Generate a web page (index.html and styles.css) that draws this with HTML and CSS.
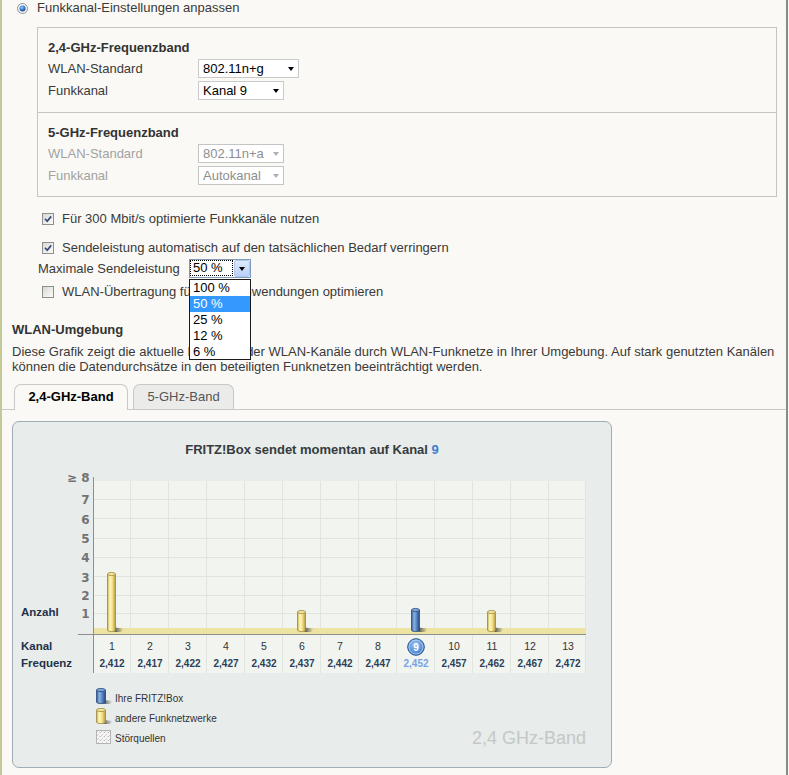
FILE: index.html
```html
<!DOCTYPE html>
<html lang="de">
<head>
<meta charset="utf-8">
<title>WLAN Funkkanal-Einstellungen</title>
<link rel="stylesheet" href="styles.css">
</head>
<body>
<div class="page">
  <div class="radio-row">
    <svg class="radio" width="11" height="11" viewBox="0 0 11 11">
      <defs>
        <radialGradient id="rdot" cx="0.4" cy="0.35" r="0.7">
          <stop offset="0" stop-color="#9cd0ff"/>
          <stop offset="0.5" stop-color="#3d7fd0"/>
          <stop offset="1" stop-color="#163f7a"/>
        </radialGradient>
      </defs>
      <circle cx="5.5" cy="5.5" r="5" fill="#f4f4f0" stroke="#8796a6" stroke-width="1"/>
      <circle cx="5.5" cy="5.5" r="3" fill="url(#rdot)"/>
    </svg>
    <span>Funkkanal-Einstellungen anpassen</span>
  </div>

  <div class="freqbox">
    <div class="band">
      <div class="band-title">2,4-GHz-Frequenzband</div>
      <div class="row"><span class="lbl">WLAN-Standard</span><div class="sel w101">802.11n+g</div></div>
      <div class="row"><span class="lbl">Funkkanal</span><div class="sel w86">Kanal 9</div></div>
    </div>
    <div class="band band-off">
      <div class="band-title">5-GHz-Frequenzband</div>
      <div class="row"><span class="lbl">WLAN-Standard</span><div class="sel w86">802.11n+a</div></div>
      <div class="row"><span class="lbl">Funkkanal</span><div class="sel w86">Autokanal</div></div>
    </div>
  </div>

  <div class="opts">
    <div class="cb-row cb-first">
      <span class="cb"><svg width="10" height="10" viewBox="0 0 10 10"><path d="M2 4.8 L4.2 7.2 L8.2 2.4" fill="none" stroke="#34467a" stroke-width="1.7"/></svg></span>
      <span>Für 300 Mbit/s optimierte Funkkanäle nutzen</span>
    </div>
    <div class="cb-row cb-second">
      <span class="cb"><svg width="10" height="10" viewBox="0 0 10 10"><path d="M2 4.8 L4.2 7.2 L8.2 2.4" fill="none" stroke="#34467a" stroke-width="1.7"/></svg></span>
      <span>Sendeleistung automatisch auf den tatsächlichen Bedarf verringern</span>
    </div>
    <div class="max-row">
      <span class="max-lbl">Maximale Sendeleistung</span>
      <div class="combo">
        <div class="combo-text">50 %</div>
        <div class="combo-btn"></div>
        <ul class="combo-list">
          <li>100 %</li>
          <li class="hl">50 %</li>
          <li>25 %</li>
          <li>12 %</li>
          <li>6 %</li>
        </ul>
      </div>
    </div>
    <div class="cb-row cb-third">
      <span class="cb"></span>
      <span>WLAN-Übertragung für Video-Anwendungen optimieren</span>
    </div>
  </div>

  <div class="env">
    <div class="env-title">WLAN-Umgebung</div>
    <div class="env-desc">Diese Grafik zeigt die aktuelle Belegung der WLAN-Kanäle durch WLAN-Funknetze in Ihrer Umgebung. Auf stark genutzten Kanälen<br>können die Datendurchsätze in den beteiligten Funknetzen beeinträchtigt werden.</div>
  </div>

  <div class="tabs">
    <div class="tab tab-active">2,4-GHz-Band</div>
    <div class="tab tab-off">5-GHz-Band</div>
  </div>

  <div class="panel">
    <div class="chart-title">FRITZ!Box sendet momentan auf Kanal <span class="blue">9</span></div>
    <svg class="chart" width="597" height="203" viewBox="13 470 597 203">
      <defs>
        <linearGradient id="gy" x1="0" x2="1" y1="0" y2="0">
          <stop offset="0" stop-color="#c9af4e"/>
          <stop offset="0.3" stop-color="#fff8c0"/>
          <stop offset="0.62" stop-color="#f1df88"/>
          <stop offset="1" stop-color="#b59a3a"/>
        </linearGradient>
        <linearGradient id="gb" x1="0" x2="1" y1="0" y2="0">
          <stop offset="0" stop-color="#2d5590"/>
          <stop offset="0.32" stop-color="#8db4e4"/>
          <stop offset="0.62" stop-color="#5a88c6"/>
          <stop offset="1" stop-color="#24477e"/>
        </linearGradient>
        <linearGradient id="gs" x1="0" x2="1" y1="0" y2="0">
          <stop offset="0" stop-color="#333" stop-opacity="0.85"/>
          <stop offset="1" stop-color="#666" stop-opacity="0"/>
        </linearGradient>
        <radialGradient id="gc" cx="0.45" cy="0.35" r="0.65">
          <stop offset="0" stop-color="#9cc4f4"/>
          <stop offset="1" stop-color="#3f7acb"/>
        </radialGradient>
        <pattern id="noise" width="4" height="4" patternUnits="userSpaceOnUse">
          <rect width="4" height="4" fill="#f6f6f4"/>
          <rect x="0" y="0" width="1" height="1" fill="#b8b8b8"/>
          <rect x="2" y="2" width="1" height="1" fill="#c8c8c8"/>
          <rect x="3" y="0" width="1" height="1" fill="#dcdcdc"/>
          <rect x="1" y="3" width="1" height="1" fill="#d0d0d0"/>
        </pattern>
      </defs>

      <rect x="93" y="481" width="493" height="192" fill="#f1f4ef"/>
      <g stroke="#e1e5df" stroke-width="1">
        <line x1="130.5" y1="481" x2="130.5" y2="673"/>
        <line x1="168.5" y1="481" x2="168.5" y2="673"/>
        <line x1="206.5" y1="481" x2="206.5" y2="673"/>
        <line x1="244.5" y1="481" x2="244.5" y2="673"/>
        <line x1="282.5" y1="481" x2="282.5" y2="673"/>
        <line x1="320.5" y1="481" x2="320.5" y2="673"/>
        <line x1="358.5" y1="481" x2="358.5" y2="673"/>
        <line x1="396.5" y1="481" x2="396.5" y2="673"/>
        <line x1="434.5" y1="481" x2="434.5" y2="673"/>
        <line x1="472.5" y1="481" x2="472.5" y2="673"/>
        <line x1="510.5" y1="481" x2="510.5" y2="673"/>
        <line x1="548.5" y1="481" x2="548.5" y2="673"/>
        <line x1="585.5" y1="481" x2="585.5" y2="673"/>
        <line x1="93" y1="499.5" x2="586" y2="499.5"/>
        <line x1="93" y1="518.5" x2="586" y2="518.5"/>
        <line x1="93" y1="538.5" x2="586" y2="538.5"/>
        <line x1="93" y1="557.5" x2="586" y2="557.5"/>
        <line x1="93" y1="576.5" x2="586" y2="576.5"/>
        <line x1="93" y1="595.5" x2="586" y2="595.5"/>
        <line x1="93" y1="613.5" x2="586" y2="613.5"/>
      </g>
      <rect x="93" y="628" width="493" height="6" fill="#ede4a3"/>
      <line x1="93.5" y1="477" x2="93.5" y2="673" stroke="#8e8e8e"/>
      <line x1="78" y1="634.5" x2="586" y2="634.5" stroke="#8e8e8e"/>

      <g class="ylab">
        <text x="89.5" y="482">≥ 8</text>
        <text x="89.5" y="503.5">7</text>
        <text x="89.5" y="523.5">6</text>
        <text x="89.5" y="542.5">5</text>
        <text x="89.5" y="562">4</text>
        <text x="89.5" y="581.5">3</text>
        <text x="89.5" y="599.5">2</text>
        <text x="89.5" y="617.5">1</text>
      </g>

      <g class="rowlab">
        <text x="21" y="616">Anzahl</text>
        <text x="21" y="650">Kanal</text>
        <text x="21" y="667">Frequenz</text>
      </g>

      <g>
        <path d="M114.5 627.5 L124 628.5 L121 632 L114.5 632 Z" fill="url(#gs)"/>
        <path d="M107.5 574 L107.5 630 A4 1.6 0 0 0 115.5 630 L115.5 574 Z" fill="url(#gy)" stroke="#9d8840" stroke-width="0.8"/>
        <ellipse cx="111.5" cy="574" rx="4" ry="1.6" fill="#f2e49a" stroke="#9d8840" stroke-width="0.8"/>
      </g>
      <g>
        <path d="M304.5 627.5 L314 628.5 L311 632 L304.5 632 Z" fill="url(#gs)"/>
        <path d="M297.5 612 L297.5 630 A4 1.6 0 0 0 305.5 630 L305.5 612 Z" fill="url(#gy)" stroke="#9d8840" stroke-width="0.8"/>
        <ellipse cx="301.5" cy="612" rx="4" ry="1.6" fill="#f2e49a" stroke="#9d8840" stroke-width="0.8"/>
      </g>
      <g>
        <path d="M418.5 627.5 L428 628.5 L425 632 L418.5 632 Z" fill="url(#gs)"/>
        <path d="M411.5 610 L411.5 630 A4 1.6 0 0 0 419.5 630 L419.5 610 Z" fill="url(#gb)" stroke="#294a7c" stroke-width="0.8"/>
        <ellipse cx="415.5" cy="610" rx="4" ry="1.6" fill="#7ea5da" stroke="#294a7c" stroke-width="0.8"/>
      </g>
      <g>
        <path d="M494.5 627.5 L504 628.5 L501 632 L494.5 632 Z" fill="url(#gs)"/>
        <path d="M487.5 612 L487.5 630 A4 1.6 0 0 0 495.5 630 L495.5 612 Z" fill="url(#gy)" stroke="#9d8840" stroke-width="0.8"/>
        <ellipse cx="491.5" cy="612" rx="4" ry="1.6" fill="#f2e49a" stroke="#9d8840" stroke-width="0.8"/>
      </g>

      <g class="chn">
        <text x="112" y="650">1</text>
        <text x="150" y="650">2</text>
        <text x="188" y="650">3</text>
        <text x="226" y="650">4</text>
        <text x="264" y="650">5</text>
        <text x="302" y="650">6</text>
        <text x="340" y="650">7</text>
        <text x="378" y="650">8</text>
        <text x="454" y="650">10</text>
        <text x="492" y="650">11</text>
        <text x="530" y="650">12</text>
        <text x="568" y="650">13</text>
      </g>
      <circle cx="416" cy="647" r="8.3" fill="url(#gc)" stroke="#24528f" stroke-width="1"/>
      <circle cx="416" cy="647" r="7" fill="none" stroke="#dbe9fb" stroke-width="0.8" opacity="0.8"/>
      <text class="chn-sel" x="416" y="650.5">9</text>

      <g class="frq">
        <text x="112" y="667">2,412</text>
        <text x="150" y="667">2,417</text>
        <text x="188" y="667">2,422</text>
        <text x="226" y="667">2,427</text>
        <text x="264" y="667">2,432</text>
        <text x="302" y="667">2,437</text>
        <text x="340" y="667">2,442</text>
        <text x="378" y="667">2,447</text>
        <text class="frq-sel" x="416" y="667">2,452</text>
        <text x="454" y="667">2,457</text>
        <text x="492" y="667">2,462</text>
        <text x="530" y="667">2,467</text>
        <text x="568" y="667">2,472</text>
      </g>
    </svg>

    <div class="legend">
      <div class="leg-row">
        <svg class="leg-icon" width="19" height="20" viewBox="0 0 19 20">
          <path d="M7.5 12 L17 13 L14 16 L7.5 16 Z" fill="url(#gs)"/>
          <path d="M0.5 2 L0.5 14 A4.5 1.6 0 0 0 9.5 14 L9.5 2 Z" fill="url(#gb)" stroke="#294a7c" stroke-width="0.8"/>
          <ellipse cx="5" cy="2" rx="4.5" ry="1.6" fill="#7ea5da" stroke="#294a7c" stroke-width="0.8"/>
        </svg>
        <span>Ihre FRITZ!Box</span>
      </div>
      <div class="leg-row">
        <svg class="leg-icon" width="19" height="20" viewBox="0 0 19 20">
          <path d="M7.5 12 L17 13 L14 16 L7.5 16 Z" fill="url(#gs)"/>
          <path d="M0.5 2 L0.5 14 A4.5 1.6 0 0 0 9.5 14 L9.5 2 Z" fill="url(#gy)" stroke="#9d8840" stroke-width="0.8"/>
          <ellipse cx="5" cy="2" rx="4.5" ry="1.6" fill="#f2e49a" stroke="#9d8840" stroke-width="0.8"/>
        </svg>
        <span>andere Funknetzwerke</span>
      </div>
      <div class="leg-row leg-last">
        <div class="leg-item">
          <svg class="leg-icon" width="19" height="20" viewBox="0 0 19 20">
            <rect x="0.5" y="2.5" width="14" height="13" fill="url(#noise)" stroke="#b4b4b4"/>
          </svg>
          <span>Störquellen</span>
        </div>
        <span class="band-name">2,4 GHz-Band</span>
      </div>
    </div>
  </div>
</div>
</body>
</html>
```

FILE: styles.css
```css
* {
  box-sizing: border-box;
}

html,
body {
  margin: 0;
  padding: 0;
  background: #faf9f5;
}

body {
  font-family: "Liberation Sans", Arial, sans-serif;
  font-size: 13px;
  color: #3a3a3a;
}

.page {
  position: relative;
  width: 788px;
  height: 775px;
  border-left: 2px solid #c3ca98;
  border-right: 2px solid #7f9181;
  overflow: hidden;
}

/* top radio */
.radio-row {
  display: flex;
  align-items: center;
  height: 16px;
  padding-left: 15px;
  gap: 9px;
  line-height: 16px;
}

.radio {
  display: block;
  flex: none;
}

/* frequency box */
.freqbox {
  margin: 11px 0 0 35px;
  width: 740px;
  border: 1px solid #c6c6c1;
}

.band {
  padding: 12px 10px 12px;
}

.band + .band {
  border-top: 1px solid #c6c6c1;
  padding-bottom: 11px;
}

.band-title {
  font-weight: bold;
  line-height: 16px;
  margin-bottom: 3px;
  color: #333;
}

.row {
  display: flex;
  align-items: center;
  height: 19px;
}

.row + .row {
  margin-top: 3px;
}

.lbl {
  width: 150px;
  flex: none;
}

.sel {
  position: relative;
  height: 19px;
  border: 1px solid #cacaca;
  background: #fff;
  color: #000;
  padding-left: 4px;
  line-height: 17px;
}

.sel::after {
  content: "";
  position: absolute;
  right: 4px;
  top: 7px;
  border-left: 3.5px solid transparent;
  border-right: 3.5px solid transparent;
  border-top: 4px solid #000;
}

.w101 {
  width: 101px;
}

.w86 {
  width: 86px;
}

.band-off .lbl {
  color: #a2a2a2;
}

.band-off .sel {
  color: #8e8e8e;
  border-color: #c4c4c4;
}

.band-off .sel::after {
  border-top-color: #b0b0b0;
}

/* options */
.opts {
  margin-top: 14px;
  padding-left: 40px;
}

.cb-row {
  display: flex;
  align-items: center;
  gap: 8px;
  height: 16px;
  line-height: 16px;
}

.cb-second {
  margin-top: 13px;
}

.cb-third {
  margin-top: 6px;
}

.cb {
  flex: none;
  width: 12px;
  height: 12px;
  border: 1px solid #8e8f8f;
  background: linear-gradient(135deg, #d9d9d3, #fbfbf9);
  display: flex;
  align-items: center;
  justify-content: center;
}

.cb svg {
  display: block;
}

.max-row {
  display: flex;
  align-items: center;
  height: 19px;
  margin: 3px 0 0 -4px;
}

.max-lbl {
  width: 151px;
  flex: none;
}

.combo {
  position: relative;
  display: flex;
  width: 62px;
  height: 19px;
  border: 1px solid #7f9db9;
  background: #fff;
}

.combo-text {
  width: 43px;
  height: 16px;
  border: 1px dotted #000;
  padding-left: 2px;
  line-height: 14px;
  color: #000;
}

.combo-btn {
  position: relative;
  width: 16px;
  height: 17px;
  margin-left: 1px;
  border: 1px solid #afc6ef;
  border-radius: 2px;
  background: linear-gradient(#dde9fc, #bcd1f7);
}

.combo-btn::after {
  content: "";
  position: absolute;
  left: 4px;
  top: 6px;
  border-left: 3.5px solid transparent;
  border-right: 3.5px solid transparent;
  border-top: 4px solid #000;
}

.combo-list {
  position: absolute;
  left: -1px;
  top: 19px;
  width: 62px;
  height: 81px;
  margin: 0;
  padding: 0;
  list-style: none;
  border: 1px solid #1a1a1a;
  background: #fff;
  z-index: 5;
}

.combo-list li {
  height: 16px;
  line-height: 16px;
  padding-left: 3px;
  color: #000;
}

.combo-list li.hl {
  background: #3399ff;
  color: #fff;
}

/* environment */
.env {
  margin-top: 22px;
  padding-left: 10px;
}

.env-title {
  font-weight: bold;
  line-height: 16px;
  color: #333;
}

.env-desc {
  margin-top: 6px;
  line-height: 15px;
  white-space: nowrap;
}

/* tabs */
.tabs {
  display: flex;
  align-items: flex-start;
  gap: 5px;
  margin-top: 10px;
  padding-left: 12px;
  height: 26px;
  border-bottom: 1px solid #c8c8c8;
}

.tab {
  height: 25px;
  border: 1px solid #c8c8c8;
  border-bottom: none;
  border-radius: 7px 7px 0 0;
  text-align: center;
  line-height: 23px;
}

.tab-active {
  width: 114px;
  height: 26px;
  background: #faf9f5;
  font-weight: bold;
  color: #000;
  position: relative;
  z-index: 1;
}

.tab-off {
  width: 101px;
  background: #ebebea;
  color: #555;
}

/* chart panel */
.panel {
  margin: 11px 0 0 10px;
  width: 600px;
  height: 347px;
  border: 1px solid #9eacb4;
  border-radius: 7px;
  background: #e8ecea;
}

.chart-title {
  padding-top: 20px;
  line-height: 16px;
  text-align: center;
  font-weight: bold;
  color: #363b40;
}

.blue {
  color: #3b7ed0;
}

.chart {
  display: block;
  margin-top: 12px;
}

.chart text {
  font-family: "Liberation Sans", Arial, sans-serif;
}

.chart .ylab text {
  font-family: "DejaVu Sans", sans-serif;
  font-weight: bold;
  font-size: 12px;
  fill: #727272;
  text-anchor: end;
}

.rowlab text {
  font-weight: bold;
  font-size: 11.5px;
  fill: #22324a;
}

.chn text {
  font-size: 10.5px;
  fill: #333;
  text-anchor: middle;
}

.chart .chn-sel {
  font-size: 10px;
  font-weight: bold;
  fill: #fff;
  text-anchor: middle;
}

.frq text {
  font-size: 10px;
  font-weight: bold;
  fill: #2d3f5b;
  text-anchor: middle;
}

.chart .frq .frq-sel {
  fill: #78a3e6;
}

.legend {
  margin-top: 15px;
  padding: 0 25px 0 83px;
}

.leg-row {
  display: flex;
  align-items: center;
  height: 20px;
  font-size: 10px;
  color: #333;
}

.leg-item {
  display: flex;
  align-items: center;
}

.leg-icon {
  display: block;
  flex: none;
}

.leg-last {
  justify-content: space-between;
}

.band-name {
  font-size: 18px;
  color: #c5c8c5;
  line-height: 20px;
}
```
